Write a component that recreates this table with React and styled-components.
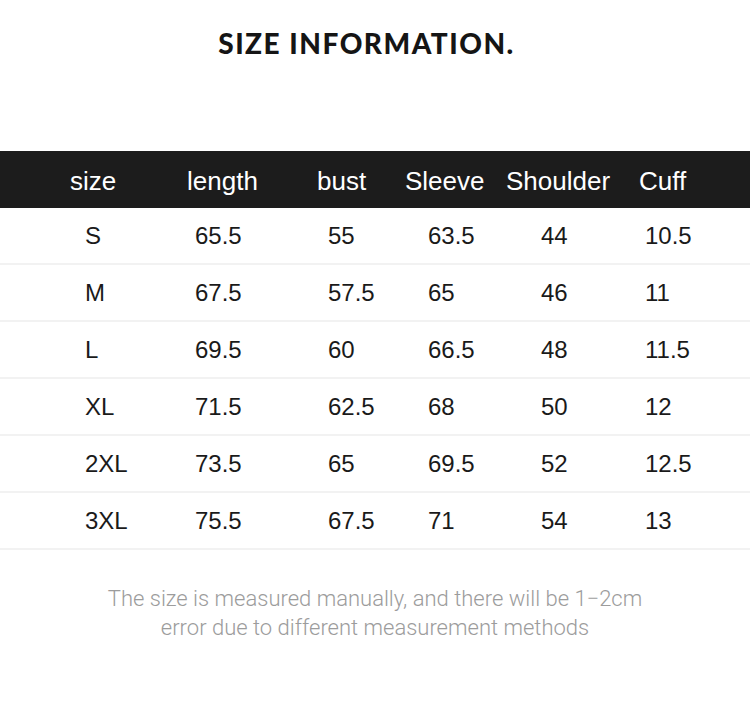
import React from 'react';
import styled, { createGlobalStyle } from 'styled-components';

const GlobalStyle = createGlobalStyle`
  body {
    margin: 0;
    background: #fff;
    font-family: "Liberation Sans", Arial, sans-serif;
  }
`;

const Page = styled.div`
  width: 750px;
  height: 721px;
  background: #fff;
  overflow: hidden;
`;

const Title = styled.h1`
  margin: 0;
  padding: 26px 17px 0 0;
  height: 151px;
  box-sizing: border-box;
  text-align: center;
  font-family: Lato, "Liberation Sans", sans-serif;
  font-weight: 900;
  font-size: 28px;
  line-height: 34px;
  color: #151515;
  letter-spacing: 1.5px;
`;

const HeaderRow = styled.div`
  display: grid;
  grid-template-columns: 117px 130px 88px 101px 133px 1fr;
  align-items: center;
  box-sizing: border-box;
  height: 57px;
  padding: 3px 0 0 70px;
  background: #1c1c1c;
  color: #fff;
  font-size: 26px;
`;

const Row = styled.div`
  display: grid;
  grid-template-columns: 110px 133px 100px 113px 104px 1fr;
  align-items: center;
  height: 55px;
  padding-left: 85px;
  border-bottom: 2px solid #f2f2f2;
  color: #1a1a1a;
  font-size: 24px;
`;

const Cell = styled.span`
  white-space: nowrap;
`;

const Note = styled.p`
  margin: 34px 0 0;
  text-align: center;
  font-family: Roboto, "Liberation Sans", sans-serif;
  font-weight: 300;
  font-size: 22px;
  line-height: 29px;
  color: #9c9c9c;
`;

const headers = ['size', 'length', 'bust', 'Sleeve', 'Shoulder', 'Cuff'];

const rows = [
  ['S', '65.5', '55', '63.5', '44', '10.5'],
  ['M', '67.5', '57.5', '65', '46', '11'],
  ['L', '69.5', '60', '66.5', '48', '11.5'],
  ['XL', '71.5', '62.5', '68', '50', '12'],
  ['2XL', '73.5', '65', '69.5', '52', '12.5'],
  ['3XL', '75.5', '67.5', '71', '54', '13'],
];

const App = () => (
  <Page>
    <GlobalStyle />
    <Title>SIZE INFORMATION.</Title>
    <HeaderRow>
      {headers.map((h) => <Cell key={h}>{h}</Cell>)}
    </HeaderRow>
    {rows.map((r) => (
      <Row key={r[0]}>
        {r.map((v, i) => <Cell key={i}>{v}</Cell>)}
      </Row>
    ))}
    <Note>
      The size is measured manually, and there will be 1−2cm
      <br />
      error due to different measurement methods
    </Note>
  </Page>
);

export default App;
